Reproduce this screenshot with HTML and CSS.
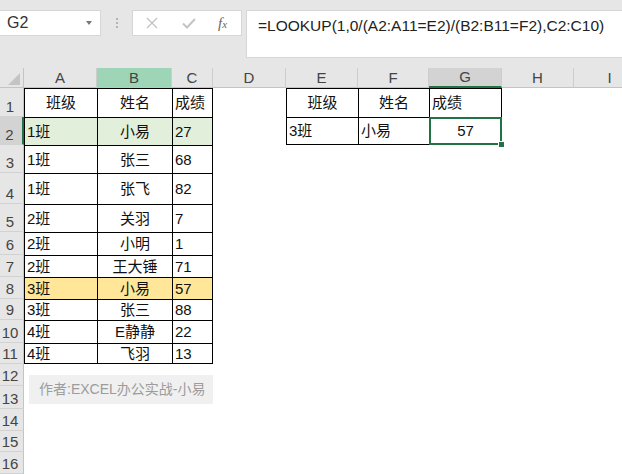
FILE: index.html
```html
<!DOCTYPE html>
<html>

<head>
  <title>LOOKUP</title>
  <link rel="stylesheet" href="styles.css">
</head>

<body>
  <div class="app">
    <div class="toolbar">
      <div class="namebox">
        <span class="ref">G2</span>
        <span class="caret"></span>
      </div>
      <div class="grip"><i></i><i></i><i></i></div>
      <div class="fxbox">
        <svg class="ico" width="12" height="12" viewBox="0 0 12 12">
          <path d="M1 1 L11 11 M11 1 L1 11" stroke="#c4c4c4" stroke-width="1.4" fill="none" />
        </svg>
        <svg class="ico" width="14" height="11" viewBox="0 0 14 11">
          <path d="M1 5.5 L5 9.5 L13 1" stroke="#c4c4c4" stroke-width="2" fill="none" />
        </svg>
        <span class="fx">f<small>x</small></span>
      </div>
      <div class="formula">=LOOKUP(1,0/(A2:A11=E2)/(B2:B11=F2),C2:C10)</div>
    </div>

    <table class="sheet">
      <colgroup>
        <col class="w-rn">
        <col class="w-a">
        <col class="w-b">
        <col class="w-c">
        <col class="w-d">
        <col class="w-e">
        <col class="w-f">
        <col class="w-g">
        <col class="w-h">
        <col class="w-i">
      </colgroup>
      <tr class="head">
        <th class="corner"><span class="tri"></span></th>
        <th class="cn">A</th>
        <th class="cn on">B</th>
        <th class="cn">C</th>
        <th class="cn">D</th>
        <th class="cn">E</th>
        <th class="cn">F</th>
        <th class="cn cur">G</th>
        <th class="cn">H</th>
        <th class="cn">I</th>
      </tr>
      <tr class="h29">
        <th class="rn">1</th>
        <td class="bx mid">班级</td>
        <td class="bx mid">姓名</td>
        <td class="bx br">成绩</td>
        <td></td>
        <td class="bx mid">班级</td>
        <td class="bx mid">姓名</td>
        <td class="bx br">成绩</td>
        <td></td>
        <td></td>
      </tr>
      <tr class="h28">
        <th class="rn cur">2</th>
        <td class="bx g">1班</td>
        <td class="bx g mid">小易</td>
        <td class="bx br g">27</td>
        <td></td>
        <td class="bx bb">3班</td>
        <td class="bx bb">小易</td>
        <td class="bx br bb mid sel">57</td>
        <td></td>
        <td></td>
      </tr>
      <tr class="h28">
        <th class="rn">3</th>
        <td class="bx">1班</td>
        <td class="bx mid">张三</td>
        <td class="bx br">68</td>
        <td></td><td></td><td></td><td></td><td></td><td></td>
      </tr>
      <tr class="h31">
        <th class="rn">4</th>
        <td class="bx">1班</td>
        <td class="bx mid">张飞</td>
        <td class="bx br">82</td>
        <td></td><td></td><td></td><td></td><td></td><td></td>
      </tr>
      <tr class="h28">
        <th class="rn">5</th>
        <td class="bx">2班</td>
        <td class="bx mid">关羽</td>
        <td class="bx br">7</td>
        <td></td><td></td><td></td><td></td><td></td><td></td>
      </tr>
      <tr class="h23">
        <th class="rn">6</th>
        <td class="bx">2班</td>
        <td class="bx mid">小明</td>
        <td class="bx br">1</td>
        <td></td><td></td><td></td><td></td><td></td><td></td>
      </tr>
      <tr class="h22">
        <th class="rn">7</th>
        <td class="bx">2班</td>
        <td class="bx mid">王大锤</td>
        <td class="bx br">71</td>
        <td></td><td></td><td></td><td></td><td></td><td></td>
      </tr>
      <tr class="h22">
        <th class="rn">8</th>
        <td class="bx y">3班</td>
        <td class="bx y mid">小易</td>
        <td class="bx br y">57</td>
        <td></td><td></td><td></td><td></td><td></td><td></td>
      </tr>
      <tr class="h21">
        <th class="rn">9</th>
        <td class="bx">3班</td>
        <td class="bx mid">张三</td>
        <td class="bx br">88</td>
        <td></td><td></td><td></td><td></td><td></td><td></td>
      </tr>
      <tr class="h23">
        <th class="rn">10</th>
        <td class="bx">4班</td>
        <td class="bx mid">E静静</td>
        <td class="bx br">22</td>
        <td></td><td></td><td></td><td></td><td></td><td></td>
      </tr>
      <tr class="h21">
        <th class="rn">11</th>
        <td class="bx bb">4班</td>
        <td class="bx bb mid">飞羽</td>
        <td class="bx br bb">13</td>
        <td></td><td></td><td></td><td></td><td></td><td></td>
      </tr>
      <tr class="h22">
        <th class="rn">12</th>
        <td class="note-cell" colspan="3" rowspan="2">
          <div class="note">作者:EXCEL办公实战-小易</div>
        </td>
        <td></td><td></td><td></td><td></td><td></td><td></td>
      </tr>
      <tr class="h23">
        <th class="rn">13</th>
        <td></td><td></td><td></td><td></td><td></td><td></td>
      </tr>
      <tr class="h22">
        <th class="rn">14</th>
        <td></td><td></td><td></td><td></td><td></td><td></td><td></td><td></td><td></td>
      </tr>
      <tr class="h21">
        <th class="rn">15</th>
        <td></td><td></td><td></td><td></td><td></td><td></td><td></td><td></td><td></td>
      </tr>
      <tr class="h22">
        <th class="rn">16</th>
        <td></td><td></td><td></td><td></td><td></td><td></td><td></td><td></td><td></td>
      </tr>
    </table>
  </div>
</body>

</html>
```

FILE: styles.css
```css
body {
  margin: 0;
  padding: 0;
  background-color: #fff;
  font-family: "Liberation Sans", "Noto Sans CJK SC", sans-serif;
  overflow: hidden;
}

.app {
  width: 622px;
  height: 474px;
  overflow: hidden;
}

/* formula bar */
.toolbar {
  display: flex;
  align-items: flex-start;
  height: 68px;
  padding-top: 10px;
  box-sizing: border-box;
  background-color: #e6e6e6;
}

.namebox {
  display: flex;
  align-items: center;
  justify-content: space-between;
  width: 101px;
  height: 26px;
  box-sizing: border-box;
  padding: 0 8px 0 7px;
  background-color: #fff;
  border: 1px solid #d6d6d6;
  border-left: none;
}

.ref {
  font-size: 16px;
  color: #333;
}

.caret {
  width: 0;
  height: 0;
  border-left: 3px solid transparent;
  border-right: 3px solid transparent;
  border-top: 4px solid #777;
}

.grip {
  display: flex;
  flex-direction: column;
  align-items: center;
  justify-content: center;
  gap: 2px;
  width: 31px;
  height: 26px;
}

.grip i {
  width: 2px;
  height: 2px;
  background-color: #b4b4b4;
}

.fxbox {
  display: flex;
  align-items: center;
  width: 110px;
  height: 26px;
  box-sizing: border-box;
  padding-left: 13px;
  background-color: #fff;
  border: 1px solid #d6d6d6;
}

.ico {
  margin-right: 24px;
}

.fx {
  font-family: "Liberation Serif", serif;
  font-style: italic;
  font-size: 15px;
  color: #666;
  margin-left: -2px;
}

.fx small {
  font-size: 11px;
}

.formula {
  flex: 1;
  height: 48px;
  margin-left: 4px;
  box-sizing: border-box;
  padding: 4px 0 0 11px;
  background-color: #fff;
  border: 1px solid #d6d6d6;
  border-right: none;
  font-size: 15.5px;
  line-height: 22px;
  color: #222;
  white-space: nowrap;
}

/* grid */
.sheet {
  table-layout: fixed;
  border-collapse: separate;
  border-spacing: 0;
  width: 646px;
}

.w-rn { width: 24px; }
.w-a { width: 73px; }
.w-b { width: 75px; }
.w-c { width: 41px; }
.w-d { width: 73px; }
.w-e { width: 72px; }
.w-f { width: 71px; }
.w-g { width: 73px; }
.w-h { width: 72px; }
.w-i { width: 72px; }

.head { height: 20px; }
.h21 { height: 21px; }
.h22 { height: 22px; }
.h23 { height: 23px; }
.h28 { height: 28px; }
.h29 { height: 29px; }
.h31 { height: 31px; }

th {
  padding: 0;
  font-weight: normal;
  color: #444;
  background-color: #e6e6e6;
  box-sizing: border-box;
}

.corner {
  text-align: right;
  vertical-align: bottom;
  padding: 0 3px 2px 0;
  border-right: 1px solid #c4c4c4;
  border-bottom: 1px solid #c4c4c4;
  line-height: 0;
}

.tri {
  display: inline-block;
  width: 0;
  height: 0;
  border-left: 12px solid transparent;
  border-bottom: 12px solid #c4c4c4;
}

.cn {
  font-size: 15px;
  line-height: 18px;
  text-align: center;
  vertical-align: middle;
  border-right: 1px solid #cdcdcd;
  border-bottom: 1px solid #c4c4c4;
}

.cn.on {
  background-color: #9fd5b7;
}

.cn.cur {
  background-color: #d3d3d3;
  border-bottom: 2px solid #217346;
}

.rn {
  font-size: 15px;
  line-height: 16px;
  text-align: center;
  vertical-align: bottom;
  padding: 0 3px 1px 0;
  border-right: 1px solid #c4c4c4;
  border-bottom: 1px solid #d2d2d2;
}

.rn.cur {
  background-color: #d3d3d3;
  border-right: 2px solid #217346;
}

td {
  padding: 0 2px;
  font-size: 15px;
  line-height: 18px;
  color: #111;
  white-space: nowrap;
  overflow: hidden;
  vertical-align: middle;
}

.bx {
  border-left: 1px solid #000;
  border-top: 1px solid #000;
}

.br {
  border-right: 1px solid #000;
}

.bb {
  border-bottom: 1px solid #000;
}

.mid {
  text-align: center;
}

.g {
  background-color: #e2efda;
}

.y {
  background-color: #ffe699;
}

.sel {
  position: relative;
  overflow: visible;
}

.sel::after {
  content: "";
  position: absolute;
  top: -1px;
  left: -1px;
  right: -1px;
  bottom: -1px;
  border: 2px solid #217346;
}

.sel::before {
  content: "";
  position: absolute;
  right: -4px;
  bottom: -4px;
  width: 5px;
  height: 5px;
  background-color: #217346;
  border: 1px solid #fff;
  z-index: 1;
}

.note-cell {
  vertical-align: top;
  padding: 11px 0 0 5px;
}

.note {
  height: 29px;
  padding-left: 10px;
  background-color: #f0f0f0;
  color: #9c9c9c;
  font-size: 14px;
  line-height: 29px;
}
```
